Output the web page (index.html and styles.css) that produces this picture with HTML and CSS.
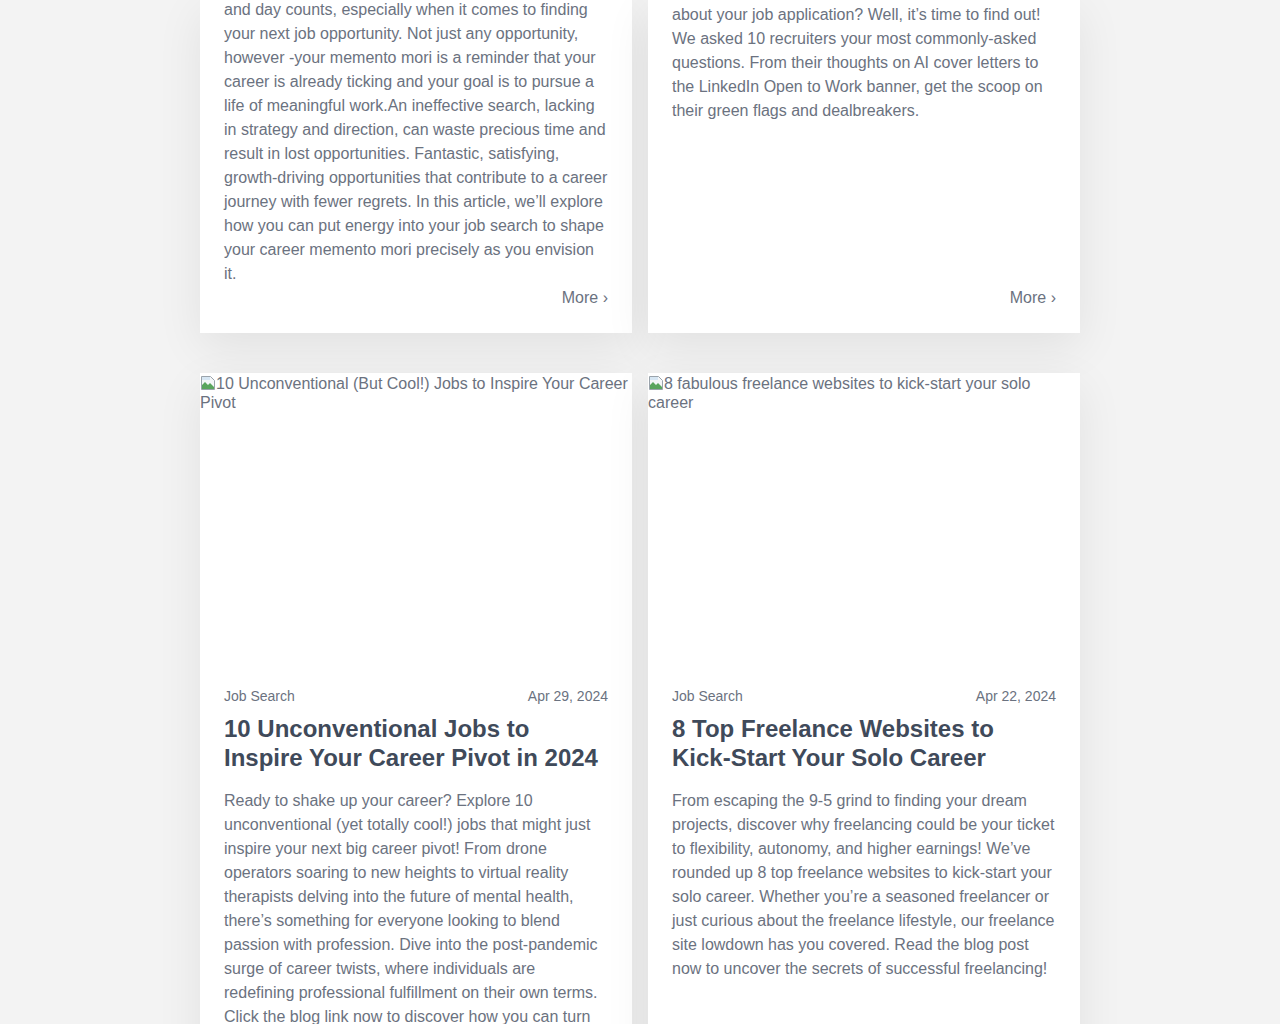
FILE: index.html
```html
<!DOCTYPE html>
<html lang="en">
<head>
<meta charset="utf-8">
<title>Blog</title>
<link rel="stylesheet" href="styles.css">
</head>
<body>
<main class="grid">
  <article class="card">
    <div class="card-body">
      <p class="excerpt">and day counts, especially when it comes to finding your next job opportunity. Not just any opportunity, however -your memento mori is a reminder that your career is already ticking and your goal is to pursue a life of meaningful work.An ineffective search, lacking in strategy and direction, can waste precious time and result in lost opportunities. Fantastic, satisfying, growth-driving opportunities that contribute to a career journey with fewer regrets. In this article, we’ll explore how you can put energy into your job search to shape your career memento mori precisely as you envision it.</p>
      <a class="more" href="#">More ›</a>
    </div>
  </article>
  <article class="card">
    <div class="card-body">
      <p class="excerpt shifted">about your job application? Well, it’s time to find out! We asked 10 recruiters your most commonly-asked questions. From their thoughts on AI cover letters to the LinkedIn Open to Work banner, get the scoop on their green flags and dealbreakers.</p>
      <a class="more" href="#">More ›</a>
    </div>
  </article>

  <article class="card">
    <div class="thumb"><svg class="broken" width="16" height="16" viewBox="0 0 16 16"><path d="M1.5 1.5h9l4 4v9h-13z" fill="#f4f6f8" stroke="#9aa3ab"/><path d="M2 10l3-3 3 3 2-2 4 4v2H2z" fill="#5aa55e"/><path d="M2 2h8v3H2z" fill="#d6e6f3"/></svg>10 Unconventional (But Cool!) Jobs to Inspire Your Career Pivot</div>
    <div class="card-body">
      <div class="meta"><span>Job Search</span><span>Apr 29, 2024</span></div>
      <h2 class="title">10 Unconventional Jobs to Inspire Your Career Pivot in 2024</h2>
      <p class="excerpt">Ready to shake up your career? Explore 10 unconventional (yet totally cool!) jobs that might just inspire your next big career pivot! From drone operators soaring to new heights to virtual reality therapists delving into the future of mental health, there’s something for everyone looking to blend passion with profession. Dive into the post-pandemic surge of career twists, where individuals are redefining professional fulfillment on their own terms. Click the blog link now to discover how you can turn your passion into a paycheck.</p>
      <a class="more" href="#">More ›</a>
    </div>
  </article>
  <article class="card">
    <div class="thumb"><svg class="broken" width="16" height="16" viewBox="0 0 16 16"><path d="M1.5 1.5h9l4 4v9h-13z" fill="#f4f6f8" stroke="#9aa3ab"/><path d="M2 10l3-3 3 3 2-2 4 4v2H2z" fill="#5aa55e"/><path d="M2 2h8v3H2z" fill="#d6e6f3"/></svg>8 fabulous freelance websites to kick-start your solo career</div>
    <div class="card-body">
      <div class="meta"><span>Job Search</span><span>Apr 22, 2024</span></div>
      <h2 class="title">8 Top Freelance Websites to Kick-Start Your Solo Career</h2>
      <p class="excerpt">From escaping the 9-5 grind to finding your dream projects, discover why freelancing could be your ticket to flexibility, autonomy, and higher earnings! We’ve rounded up 8 top freelance websites to kick-start your solo career. Whether you’re a seasoned freelancer or just curious about the freelance lifestyle, our freelance site lowdown has you covered. Read the blog post now to uncover the secrets of successful freelancing!</p>
      <a class="more" href="#">More ›</a>
    </div>
  </article>
</main>
</body>
</html>
```
FILE: styles.css
```css
html, body {
  margin: 0;
  padding: 0;
  background: #f3f3f3;
  font-family: "Liberation Sans", Arial, sans-serif;
  color: #6b7280;
}

.grid {
  display: grid;
  grid-template-columns: 432px 432px;
  column-gap: 16px;
  row-gap: 40px;
  justify-content: center;
  margin-top: -2px;
  padding-bottom: 80px;
}

.card {
  background: #fff;
  display: flex;
  flex-direction: column;
  box-shadow: 0 14px 44px rgba(0, 0, 0, 0.075);
}

.card-body {
  flex: 1;
  display: flex;
  flex-direction: column;
  padding: 0 24px 23px;
}

.thumb {
  height: 288px;
  padding-top: 1px;
  font-size: 16px;
  line-height: 19px;
  color: #6b7280;
  margin-bottom: 24px;
}

.broken {
  vertical-align: -2px;
}

.meta {
  display: flex;
  justify-content: space-between;
  font-size: 14px;
  line-height: 20px;
  color: #6b7280;
}

.title {
  margin: 8px 0 17px;
  font-size: 24px;
  line-height: 29px;
  font-weight: 700;
  color: #3f4a5a;
}

.excerpt {
  margin: 0;
  flex: 1;
  font-size: 16px;
  line-height: 24px;
  color: #6b7280;
}

.excerpt.shifted {
  margin-top: 5px;
}

.more {
  align-self: flex-end;
  font-size: 16px;
  line-height: 24px;
  color: #6b7280;
  text-decoration: none;
}
```
